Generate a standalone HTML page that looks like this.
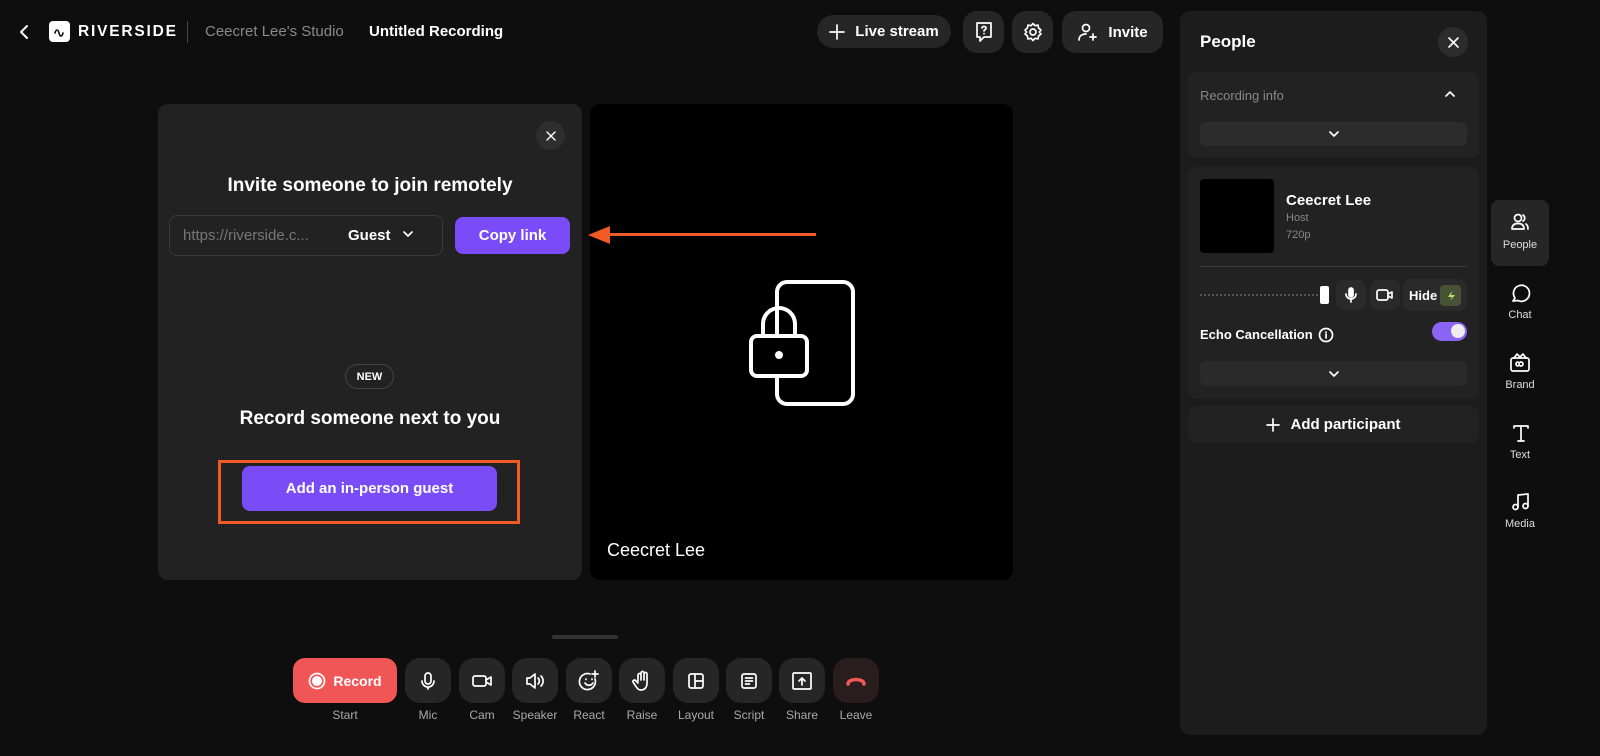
<!DOCTYPE html>
<html><head><meta charset="utf-8"><style>
*{box-sizing:border-box;margin:0;padding:0}
body{width:1600px;height:756px;background:#0e0e0e;font-family:"Liberation Sans",sans-serif;color:#fff;position:relative;overflow:hidden}
.a{position:absolute}
.c{display:flex;align-items:center;justify-content:center}
svg{fill:none;stroke:#fff;stroke-width:1.7;stroke-linecap:round;stroke-linejoin:round}
.tb{background:#262626;border-radius:14px}
.bb{position:absolute;top:658px;width:46px;height:45px;border-radius:15px;background:#262626;display:flex;align-items:center;justify-content:center}
.lb{position:absolute;top:708px;font-size:12px;color:#aaa;width:60px;text-align:center}
.side{position:absolute;left:1491px;width:58px;text-align:center;font-size:11px;color:#ddd}
</style></head><body>
<!-- header -->
<svg class="a" style="left:18px;top:24px" width="14" height="16" viewBox="0 0 14 16"><path d="M9 2 3 8l6 6" stroke-width="2"/></svg>
<div class="a c" style="left:49px;top:21px;width:21px;height:21px;background:#fff;border-radius:4px"><svg width="14" height="10" viewBox="0 0 14 10" style="stroke:#111;stroke-width:1.6"><path d="M2 6c1-4 3-4 4 0s3 4 4 0"/></svg></div>
<div class="a" style="left:78px;top:23px;font-size:15.5px;font-weight:bold;letter-spacing:1.8px">RIVERSIDE</div>
<div class="a" style="left:187px;top:21px;width:1px;height:22px;background:#444"></div>
<div class="a" style="left:205px;top:23px;font-size:15px;color:#8a8a8a">Ceecret Lee's Studio</div>
<div class="a" style="left:369px;top:23px;font-size:15px;font-weight:bold">Untitled Recording</div>

<div class="a c tb" style="left:817px;top:15px;width:134px;height:33px;border-radius:17px;font-size:15px;font-weight:bold;gap:10px"><svg width="16" height="16" viewBox="0 0 16 16"><path d="M8 1v14M1 8h14"/></svg>Live stream</div>
<div class="a c tb" style="left:963px;top:11px;width:41px;height:42px"><svg width="20" height="22" viewBox="0 0 20 22"><path d="M3 2h14v14h-7l-4 4v-4H3z"/><path d="M8 7c0-2 4-2 4 0s-2 1.5-2 3M10 12.5v.2"/></svg></div>
<div class="a c tb" style="left:1012px;top:11px;width:41px;height:42px"><svg width="20" height="20" viewBox="0 0 20 20"><circle cx="10" cy="10" r="3"/><path d="M10 1.5l2 2.2 3-.6.6 3 2.4 1.9-1.6 2 1.6 2-2.4 1.9-.6 3-3-.6-2 2.2-2-2.2-3 .6-.6-3L2 12l1.6-2L2 8l2.4-1.9.6-3 3 .6z"/></svg></div>
<div class="a c tb" style="left:1062px;top:11px;width:101px;height:42px;font-size:15px;font-weight:bold;gap:9px"><svg width="22" height="20" viewBox="0 0 22 20"><circle cx="9" cy="6" r="3.5"/><path d="M2 18c0-4 3-6 7-6M16 12v6M13 15h6"/></svg>Invite</div>

<!-- invite card -->
<div class="a" style="left:158px;top:104px;width:424px;height:476px;background:#222;border-radius:10px"></div>
<div class="a c" style="left:536px;top:121px;width:29px;height:29px;border-radius:50%;background:#2e2e2e"><svg width="10" height="10" viewBox="0 0 10 10" style="stroke-width:1.4"><path d="M1 1l8 8M9 1 1 9"/></svg></div>
<div class="a" style="left:158px;top:175px;width:424px;text-align:center;font-size:19px;font-weight:bold">Invite someone to join remotely</div>
<div class="a" style="left:169px;top:215px;width:274px;height:41px;border:1px solid #3a3a3a;border-radius:8px"></div>
<div class="a" style="left:183px;top:227px;font-size:15px;color:#777">https://riverside.c...</div>
<div class="a" style="left:348px;top:227px;font-size:15px;font-weight:bold">Guest</div>
<svg class="a" style="left:402px;top:229px" width="12" height="10" viewBox="0 0 12 10"><path d="M2 3l4 4 4-4"/></svg>
<div class="a c" style="left:455px;top:217px;width:115px;height:37px;background:#7a4cf8;border-radius:8px;font-size:15px;font-weight:bold">Copy link</div>
<div class="a c" style="left:345px;top:364px;width:49px;height:25px;border:1px solid #444;border-radius:13px;font-size:11px;font-weight:bold">NEW</div>
<div class="a" style="left:158px;top:408px;width:424px;text-align:center;font-size:19px;font-weight:bold">Record someone next to you</div>
<div class="a" style="left:218px;top:460px;width:302px;height:64px;border:3px solid #f15a24"></div>
<div class="a c" style="left:242px;top:466px;width:255px;height:45px;background:#7a4cf8;border-radius:8px;font-size:15px;font-weight:bold">Add an in-person guest</div>

<!-- video card -->
<div class="a" style="left:590px;top:104px;width:423px;height:476px;background:#000;border-radius:10px"></div>
<svg class="a" style="left:745px;top:278px" width="112" height="130" viewBox="0 0 112 130" style="stroke-width:4"><rect x="32" y="4" width="76" height="122" rx="10" stroke-width="4"/><rect x="6" y="58" width="56" height="40" rx="6" fill="#000" stroke-width="4"/><path d="M18 58V46a16 16 0 0 1 32 0v12" stroke-width="4"/><circle cx="34" cy="77" r="4" fill="#fff" stroke="none"/></svg>
<div class="a" style="left:607px;top:540px;font-size:18px">Ceecret Lee</div>
<!-- arrow -->
<div class="a" style="left:600px;top:233px;width:216px;height:3px;background:#f15a24"></div>
<svg class="a" style="left:586px;top:224px" width="26" height="22" viewBox="0 0 26 22"><path d="M2 11 24 2v18z" style="fill:#f15a24;stroke:none"/></svg>

<!-- bottom bar -->
<div class="a" style="left:552px;top:635px;width:66px;height:4px;background:#333;border-radius:2px"></div>
<div class="a c" style="left:293px;top:658px;width:104px;height:45px;background:#f05656;border-radius:12px;font-size:14px;font-weight:bold;gap:7px"><svg width="18" height="18" viewBox="0 0 18 18"><circle cx="9" cy="9" r="7.5" stroke-width="1.7"/><circle cx="9" cy="9" r="5" fill="#fff" stroke="none"/></svg>Record</div>
<div class="lb" style="left:315px">Start</div>
<div class="bb" style="left:405px"><svg width="20" height="20" viewBox="0 0 20 20"><rect x="7" y="2" width="6" height="11" rx="3"/><path d="M4 10a6 6 0 0 0 12 0M10 16v2"/></svg></div><div class="lb" style="left:398px">Mic</div>
<div class="bb" style="left:459px"><svg width="22" height="20" viewBox="0 0 22 20"><rect x="2" y="5" width="13" height="10" rx="2"/><path d="M15 9l5-3v8l-5-3"/></svg></div><div class="lb" style="left:452px">Cam</div>
<div class="bb" style="left:512px"><svg width="22" height="20" viewBox="0 0 22 20"><path d="M3 7h3l5-4v14l-5-4H3zM14 7a4 4 0 0 1 0 6M17 5a7 7 0 0 1 0 10"/></svg></div><div class="lb" style="left:505px">Speaker</div>
<div class="bb" style="left:566px"><svg width="22" height="22" viewBox="0 0 22 22"><path d="M17 9a8 8 0 1 1-5-5"/><path d="M7 13c2 3 6 3 8 0M8 9v.5M14 9v.5M17 1v6M14 4h6"/></svg></div><div class="lb" style="left:559px">React</div>
<div class="bb" style="left:619px"><svg width="20" height="22" viewBox="0 0 20 22"><path d="M6 11V5a1.5 1.5 0 0 1 3 0v5V3a1.5 1.5 0 0 1 3 0v7V4a1.5 1.5 0 0 1 3 0v9c0 5-3 7-6 7-3 0-4-2-6-5l-2-3a1.5 1.5 0 0 1 2.5-1.5L6 13"/></svg></div><div class="lb" style="left:612px">Raise</div>
<div class="bb" style="left:673px"><svg width="20" height="20" viewBox="0 0 20 20"><rect x="3" y="3" width="14" height="14" rx="2"/><path d="M9 3v14M9 10h8"/></svg></div><div class="lb" style="left:666px">Layout</div>
<div class="bb" style="left:726px"><svg width="20" height="20" viewBox="0 0 20 20"><rect x="3" y="3" width="14" height="14" rx="2"/><path d="M6.5 7h7M6.5 10h7M6.5 13h4"/></svg></div><div class="lb" style="left:719px">Script</div>
<div class="bb" style="left:779px"><svg width="22" height="20" viewBox="0 0 22 20"><rect x="2" y="2" width="18" height="16" rx="1"/><path d="M11 14V7M8 10l3-3 3 3"/></svg></div><div class="lb" style="left:772px">Share</div>
<div class="bb" style="left:833px;background:#2a1d1d"><svg width="22" height="12" viewBox="0 0 22 12"><path d="M3 9c0-6 16-6 16 0" stroke="#f05656" stroke-width="3.5"/></svg></div><div class="lb" style="left:826px">Leave</div>

<!-- right panel -->
<div class="a" style="left:1180px;top:11px;width:307px;height:724px;background:#1c1c1c;border-radius:10px"></div>
<div class="a" style="left:1200px;top:32px;font-size:17px;font-weight:bold">People</div>
<div class="a c" style="left:1438px;top:27px;width:30px;height:30px;border-radius:50%;background:#2c2c2c"><svg width="11" height="11" viewBox="0 0 11 11" style="stroke-width:1.6"><path d="M1 1l9 9M10 1 1 10"/></svg></div>
<div class="a" style="left:1188px;top:72px;width:291px;height:86px;background:#222;border-radius:8px"></div>
<div class="a" style="left:1200px;top:88px;font-size:13px;color:#888">Recording info</div>
<svg class="a" style="left:1444px;top:89px" width="12" height="10" viewBox="0 0 12 10" style="stroke:#aaa"><path d="M2 7l4-4 4 4"/></svg>
<div class="a c" style="left:1200px;top:122px;width:267px;height:24px;background:#2c2c2c;border-radius:6px"><svg width="12" height="8" viewBox="0 0 12 8"><path d="M2 2l4 4 4-4"/></svg></div>

<div class="a" style="left:1188px;top:167px;width:291px;height:232px;background:#222;border-radius:8px"></div>
<div class="a" style="left:1200px;top:179px;width:74px;height:74px;background:#000;border-radius:4px"></div>
<div class="a" style="left:1286px;top:192px;font-size:15px;font-weight:bold">Ceecret Lee</div>
<div class="a" style="left:1286px;top:212px;font-size:11px;color:#888">Host</div>
<div class="a" style="left:1286px;top:229px;font-size:11px;color:#888">720p</div>
<div class="a" style="left:1200px;top:266px;width:267px;height:1px;background:#383838"></div>
<div class="a" style="left:1200px;top:294px;width:122px;height:3px;border-top:2px dotted #555"></div>
<div class="a" style="left:1320px;top:286px;width:9px;height:18px;background:#fff;border-radius:2px"></div>
<div class="a c" style="left:1336px;top:280px;width:30px;height:30px;background:#2a2a2a;border-radius:8px"><svg width="14" height="16" viewBox="0 0 14 16"><rect x="5" y="1" width="4" height="9" rx="2" fill="#fff"/><path d="M2 7a5 5 0 0 0 10 0M7 12v3"/></svg></div>
<div class="a c" style="left:1370px;top:280px;width:30px;height:30px;background:#2a2a2a;border-radius:8px"><svg width="18" height="14" viewBox="0 0 18 14"><rect x="1" y="2" width="11" height="10" rx="2"/><path d="M12 6l4-2v6l-4-2"/></svg></div>
<div class="a" style="left:1403px;top:279px;width:64px;height:32px;background:#2a2a2a;border-radius:8px"></div>
<div class="a" style="left:1409px;top:288px;font-size:13px;font-weight:bold">Hide</div>
<div class="a c" style="left:1440px;top:285px;width:21px;height:21px;background:#4a5236;border-radius:4px"><svg width="10" height="12" viewBox="0 0 10 12"><path d="M6 1 2 7h4l-2 4 5-6H5z" style="fill:#b7e56b;stroke:none"/></svg></div>
<div class="a" style="left:1200px;top:327px;font-size:13px;font-weight:bold">Echo Cancellation</div>
<svg class="a" style="left:1318px;top:327px" width="16" height="16" viewBox="0 0 16 16" style="stroke:#888;stroke-width:1.3"><circle cx="8" cy="8" r="6.5"/><path d="M8 7v4M8 5v.2"/></svg>
<div class="a" style="left:1432px;top:322px;width:35px;height:19px;background:#8b63f5;border-radius:10px"></div>
<div class="a" style="left:1451px;top:324px;width:14px;height:14px;background:#eee;border-radius:50%"></div>
<div class="a c" style="left:1200px;top:361px;width:267px;height:25px;background:#2a2a2a;border-radius:6px"><svg width="12" height="8" viewBox="0 0 12 8"><path d="M2 2l4 4 4-4"/></svg></div>
<div class="a c" style="left:1188px;top:406px;width:291px;height:37px;background:#222;border-radius:8px;font-size:15px;font-weight:bold;gap:10px"><svg width="14" height="14" viewBox="0 0 14 14"><path d="M7 1v12M1 7h12"/></svg>Add participant</div>

<!-- side nav -->
<div class="a" style="left:1491px;top:200px;width:58px;height:66px;background:#262626;border-radius:8px"></div>
<svg class="a" style="left:1510px;top:212px" width="20" height="20" viewBox="0 0 20 20"><circle cx="8" cy="6" r="3.5"/><path d="M2 17c0-4 2.5-5.5 6-5.5s6 1.5 6 5.5zM13 3a3.5 3.5 0 0 1 0 6M16 12c1.5 1 2 2.5 2 5"/></svg>
<div class="side" style="top:239px">People</div>
<svg class="a" style="left:1511px;top:283px" width="20" height="20" viewBox="0 0 20 20"><path d="M4 15A8 8 0 1 1 7 17.5L2 18z"/></svg>
<div class="side" style="top:309px">Chat</div>
<svg class="a" style="left:1509px;top:351px" width="22" height="22" viewBox="0 0 22 22"><rect x="2" y="7" width="18" height="13" rx="2"/><path d="M5 7l3-4 3 3 3-3 3 4M9 11a2 2 0 1 0 0 4M14 13a2 2 0 1 0 0 .1"/></svg>
<div class="side" style="top:379px">Brand</div>
<svg class="a" style="left:1511px;top:423px" width="20" height="20" viewBox="0 0 20 20" style="stroke-width:2.2"><path d="M3 5V3h14v2M10 3v15M7 18h6"/></svg>
<div class="side" style="top:449px">Text</div>
<svg class="a" style="left:1511px;top:492px" width="20" height="20" viewBox="0 0 20 20"><path d="M7 15V3l10-1v12"/><circle cx="4.5" cy="15" r="2.5"/><circle cx="14.5" cy="14" r="2.5"/></svg>
<div class="side" style="top:518px">Media</div>
</body></html>
